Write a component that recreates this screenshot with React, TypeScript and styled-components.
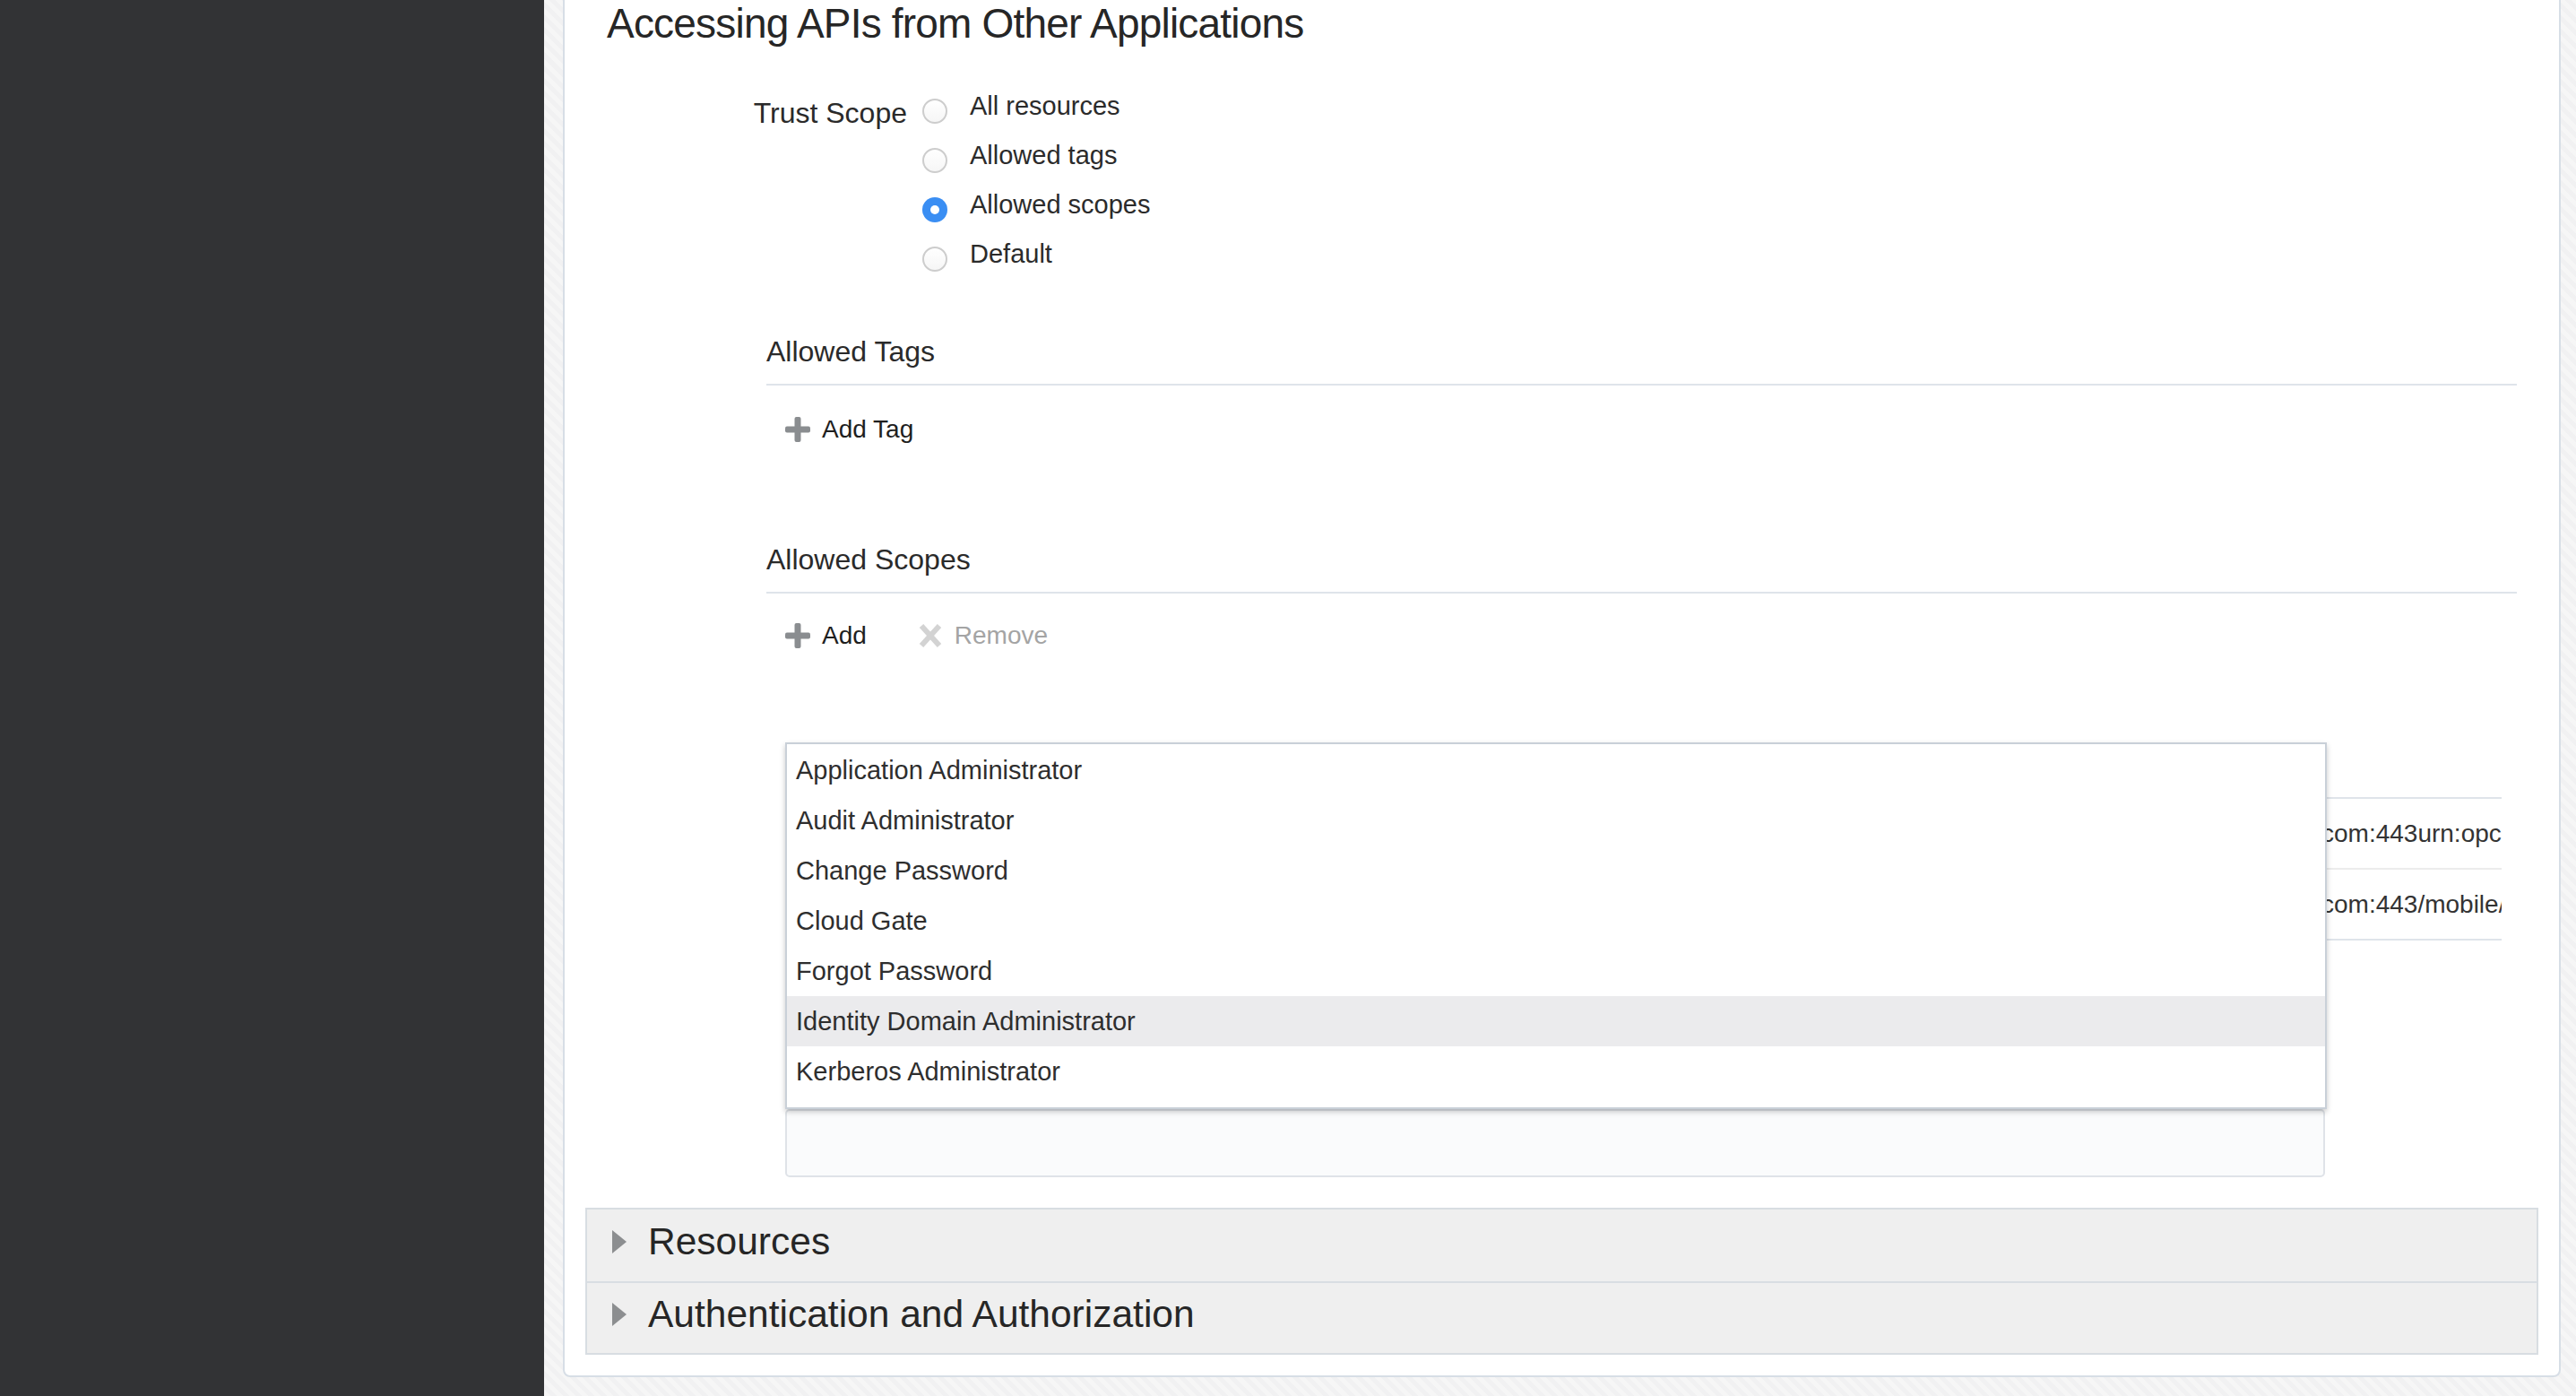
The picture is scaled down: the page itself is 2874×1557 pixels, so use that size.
import React from 'react'
import styled, { createGlobalStyle } from 'styled-components'

const GlobalStyle = createGlobalStyle`
  html, body {
    margin: 0;
    padding: 0;
  }
  body {
    font-family: "Liberation Sans", Arial, sans-serif;
    color: #2b2b2b;
  }
`

const Page = styled.div`
  display: flex;
  height: 1557px;
  overflow: hidden;
`

const Sidebar = styled.aside`
  flex: 0 0 607px;
  background: #323335;
`

// the card is scrolled so its top is off screen, so it is pinned to the bottom
const Main = styled.main`
  flex: 1;
  display: flex;
  flex-direction: column;
  justify-content: flex-end;
  padding: 0 17px 21px 21px;
  overflow: hidden;
  background: repeating-linear-gradient(45deg, #f6f6f6 0 5px, #f1f1f2 5px 10px);
`

const Card = styled.section`
  flex-shrink: 0;
  background: #fff;
  border: 2px solid #d7dee6;
  border-radius: 8px;
  padding: 20px 23px 23px;
`

const Title = styled.h2`
  margin: 0 0 0 24px;
  font-size: 46px;
  line-height: 52px;
  font-weight: 400;
  letter-spacing: -0.8px;
  color: #262626;
`

const TrustRow = styled.div`
  display: flex;
  margin-top: 39px;
`

const FieldLabel = styled.div`
  width: 359px;
  flex-shrink: 0;
  box-sizing: border-box;
  padding-top: 15px;
  text-align: right;
  font-size: 32px;
  line-height: 40px;
  color: #2a2a2a;
`

const RadioGroup = styled.div`
  display: flex;
  flex-direction: column;
  margin-left: 17px;
`

const Option = styled.label`
  display: flex;
  align-items: flex-start;
  height: 55px;
`

const RadioDot = styled.span<{ $checked?: boolean }>`
  position: relative;
  width: 28px;
  height: 28px;
  margin-top: 19px;
  box-sizing: border-box;
  border-radius: 50%;
  ${({ $checked }): string => $checked
    ? `
      background: #3a8ef3;
      &::after {
        content: '';
        position: absolute;
        left: 9px;
        top: 9px;
        width: 10px;
        height: 10px;
        border-radius: 50%;
        background: #fff;
      }
    `
    : `
      background: linear-gradient(#ffffff, #f6f6f6);
      border: 2px solid #cdcdcd;
    `}
`

const OptionText = styled.span`
  margin-left: 25px;
  font-size: 29px;
  line-height: 55px;
  color: #2b2b2b;
`

const Section = styled.div<{ $top: number }>`
  margin: ${({ $top }): number => $top}px 24px 0 202px;
`

const SectionHeading = styled.h3`
  margin: 0;
  padding-bottom: 16px;
  border-bottom: 2px solid #dfe4ea;
  font-size: 32px;
  line-height: 40px;
  font-weight: 400;
  color: #2a2a2a;
`

const Toolbar = styled.div<{ $top: number }>`
  display: flex;
  gap: 57px;
  padding-left: 21px;
  margin-top: ${({ $top }): number => $top}px;
`

const ToolButton = styled.span<{ $disabled?: boolean }>`
  display: flex;
  align-items: center;
  gap: 13px;
  font-size: 28px;
  line-height: 40px;
  color: ${({ $disabled }): string => $disabled ? '#a4a4a4' : '#1f1f1f'};
`

const ScopeTable = styled.div`
  margin: 160px 17px 0 21px;
  border-top: 2px solid #dfe4ea;
  border-bottom: 2px solid #dfe4ea;
  overflow: hidden;
`

const ScopeRow = styled.div`
  display: flex;
  align-items: center;
  height: 77px;
  font-size: 28px;
  color: #333;
  white-space: nowrap;

  & + & {
    border-top: 2px solid #ececec;
  }
`

const HostCell = styled.span`
  flex: 0 0 1728px;
  display: flex;
  justify-content: flex-end;
  overflow: hidden;
`

const PathCell = styled.span`
  flex-shrink: 0;
`

const SelectBox = styled.div`
  position: relative;
  margin: 188px 0 0 21px;
  width: 1718px;
  height: 76px;
  box-sizing: border-box;
  border: 2px solid #dfe3e8;
  border-radius: 5px;
  background: #fafbfc;
`

const Dropdown = styled.ul`
  position: absolute;
  left: -2px;
  bottom: calc(100% + 2px);
  z-index: 2;
  width: 1720px;
  box-sizing: border-box;
  margin: 0;
  padding: 1px 0 12px;
  list-style: none;
  background: #fff;
  border: 2px solid #c9d0d8;
  box-shadow: 0 3px 6px rgba(0, 0, 0, 0.22);
`

const DropdownItem = styled.li<{ $active?: boolean }>`
  height: 56px;
  padding-left: 10px;
  font-size: 29px;
  line-height: 56px;
  color: #2e2e2e;
  background: ${({ $active }): string => $active ? '#ebebed' : 'transparent'};
`

const Accordion = styled.div`
  margin-top: 34px;
  border: 2px solid #d8dde2;
  background: #efefef;
`

const AccordionHeader = styled.div`
  display: flex;
  align-items: center;
  gap: 24px;
  height: 80px;
  box-sizing: border-box;
  padding: 0 0 8px 28px;
  font-size: 42.5px;
  color: #262626;

  & + & {
    border-top: 2px solid #d8dde2;
  }
`

const PlusIcon = (): React.ReactElement => (
  <svg width='28' height='28' viewBox='0 0 28 28' fill='#8a8d90'>
    <rect x='10.5' y='0' width='7' height='28' rx='2' />
    <rect x='0' y='10.5' width='28' height='7' rx='2' />
  </svg>
)

const CrossIcon = (): React.ReactElement => (
  <svg width='28' height='28' viewBox='0 0 28 28' stroke='#d3d3d3' strokeWidth='6'>
    <line x1='4' y1='3' x2='24' y2='25' />
    <line x1='24' y1='3' x2='4' y2='25' />
  </svg>
)

const Caret = (): React.ReactElement => (
  <svg width='16' height='26' viewBox='0 0 16 26'>
    <polygon points='0,0 16,13 0,26' fill='#8c8e90' />
  </svg>
)

const trustOptions = ['All resources', 'Allowed tags', 'Allowed scopes', 'Default']

const scopeOptions = [
  'Application Administrator',
  'Audit Administrator',
  'Change Password',
  'Cloud Gate',
  'Forgot Password',
  'Identity Domain Administrator',
  'Kerberos Administrator',
]

const scopes = [
  { host: 'https://idcs-4aa2c1e7b3e54f0f8fd6.identity.oraclecloud.c', path: 'om:443urn:opc:idm:__myscopes__' },
  { host: 'https://idcs-4aa2c1e7b3e54f0f8fd6.identity.oraclecloud.c', path: 'om:443/mobile/api/v1' },
]

export default function App(): React.ReactElement {
  const trustScope = 'Allowed scopes'
  const highlighted = 'Identity Domain Administrator'

  return (
    <Page>
      <GlobalStyle />
      <Sidebar />
      <Main>
        <Card>
          <Title>Accessing APIs from Other Applications</Title>

          <TrustRow>
            <FieldLabel>Trust Scope</FieldLabel>
            <RadioGroup>
              {trustOptions.map((opt) => (
                <Option key={opt}>
                  <RadioDot $checked={opt === trustScope} />
                  <OptionText>{opt}</OptionText>
                </Option>
              ))}
            </RadioGroup>
          </TrustRow>

          <Section $top={61}>
            <SectionHeading>Allowed Tags</SectionHeading>
            <Toolbar $top={29}>
              <ToolButton><PlusIcon />Add Tag</ToolButton>
            </Toolbar>
          </Section>

          <Section $top={105}>
            <SectionHeading>Allowed Scopes</SectionHeading>
            <Toolbar $top={27}>
              <ToolButton><PlusIcon />Add</ToolButton>
              <ToolButton $disabled><CrossIcon />Remove</ToolButton>
            </Toolbar>

            <ScopeTable>
              {scopes.map((s) => (
                <ScopeRow key={s.path}>
                  <HostCell><span>{s.host}</span></HostCell>
                  <PathCell>{s.path}</PathCell>
                </ScopeRow>
              ))}
            </ScopeTable>

            <SelectBox>
              <Dropdown>
                {scopeOptions.map((name) => (
                  <DropdownItem key={name} $active={name === highlighted}>{name}</DropdownItem>
                ))}
              </Dropdown>
            </SelectBox>
          </Section>

          <Accordion>
            <AccordionHeader><Caret />Resources</AccordionHeader>
            <AccordionHeader><Caret />Authentication and Authorization</AccordionHeader>
          </Accordion>
        </Card>
      </Main>
    </Page>
  )
}
